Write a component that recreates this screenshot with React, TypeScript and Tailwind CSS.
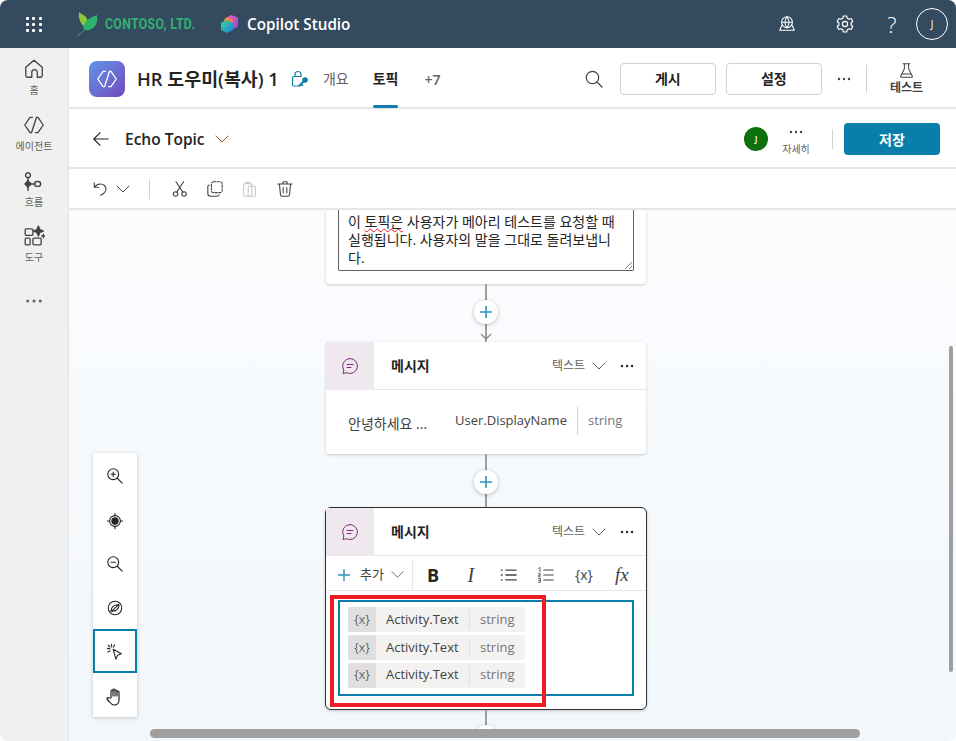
import { useId, type ReactNode } from "react";

/**
 * Copilot Studio topic editor
 * Header, sidebar, agent bar, topic bar and the authoring canvas.
 */

const line = {
  fill: "none",
  stroke: "currentColor",
  strokeWidth: 1.2,
  strokeLinecap: "round" as const,
  strokeLinejoin: "round" as const,
};

function Icon({ size = 20, children, className = "" }: { size?: number; children: ReactNode; className?: string }) {
  return (
    <svg width={size} height={size} viewBox="0 0 20 20" className={`shrink-0 ${className}`} {...line}>
      {children}
    </svg>
  );
}

function Chevron({ size = 14, className = "" }: { size?: number; className?: string }) {
  return (
    <svg width={size} height={size} viewBox="0 0 14 14" className={`shrink-0 ${className}`} {...line} strokeWidth={1}>
      <path d="M1 4l6 6 6-6" />
    </svg>
  );
}

function Dots({ className = "" }: { className?: string }) {
  return (
    <svg width="14" height="4" viewBox="0 0 14 4" className={`shrink-0 ${className}`} fill="currentColor">
      <circle cx="2" cy="2" r="1.2" />
      <circle cx="7" cy="2" r="1.2" />
      <circle cx="12" cy="2" r="1.2" />
    </svg>
  );
}

function AgentGlyph({ size = 20 }: { size?: number }) {
  return (
    <svg width={size} height={size} viewBox="0 0 20 20" className="shrink-0" {...line}>
      <path d="M8.6 3H6.4L1.6 10l4.8 7h1.3M11.4 17h2.2l4.8-7-4.8-7h-1.3M7.7 17L12.3 3" />
    </svg>
  );
}

function LeafLogo() {
  return (
    <svg width="22" height="26" viewBox="0 0 22 26" className="shrink-0">
      <path d="M2 1c3 3 7 3 8 7 .6 2.300-1 5-2.500 8C4 13 1 8 2 1z" fill="#8cc63f" />
      <path d="M20 4c1 7-1 13-8 15-3 .6-5-.6-5.500-2C6 11 13 6 20 4z" fill="#2fb170" />
      <path d="M0 25c4-2 9-7 14-14" fill="none" stroke="#2fb170" strokeWidth="1" />
    </svg>
  );
}

function CopilotLogo() {
  const id = useId();
  return (
    <svg width="19" height="20" viewBox="0 0 19 20" className="shrink-0">
      <defs>
        <linearGradient id={`${id}a`} x1="0" y1="0" x2="1" y2="1">
          <stop offset="0" stopColor="#f45bc0" />
          <stop offset="1" stopColor="#8a4be0" />
        </linearGradient>
        <linearGradient id={`${id}b`} x1="0" y1="0" x2="1" y2="1">
          <stop offset="0" stopColor="#f5a623" />
          <stop offset="1" stopColor="#f0558a" />
        </linearGradient>
        <linearGradient id={`${id}c`} x1="0" y1="0" x2="1" y2="1">
          <stop offset="0" stopColor="#3fd68a" />
          <stop offset="1" stopColor="#1d7fe8" />
        </linearGradient>
      </defs>
      <path d="M11 1l7 2.500v9L14 15l-6-9V3z" fill={`url(#${id}a)`} />
      <path d="M7 3l6 2.500V11l-7 2-2-7z" fill={`url(#${id}b)`} />
      <path d="M6 6l7 3v7l-6 3-6-3V9z" fill={`url(#${id}c)`} />
    </svg>
  );
}

function MessageIcon() {
  return (
    <svg width="20" height="20" viewBox="0 0 20 20" className="text-[#7b2d7b]" {...line} strokeWidth={1}>
      <path d="M10 2.500a7.500 7.500 0 1 1-3.400 14.200L3 17.500l.8-3.500A7.500 7.500 0 0 1 10 2.500z" />
      <path d="M7 8.500h6M7 11.500h4" />
    </svg>
  );
}

function NavItem({ label, icon, height = "h-[56px]" }: { label: string; icon: ReactNode; height?: string }) {
  return (
    <div className={`flex ${height} flex-col items-center`}>
      <div className="flex h-[24px] items-center text-[#424242]">{icon}</div>
      <span className="mt-[2px] text-[10px] leading-[14px] text-[#616161]">{label}</span>
    </div>
  );
}

function Sidebar() {
  return (
    <aside className="flex w-[69px] shrink-0 flex-col items-center border-r border-[#e3e3e3] bg-[#f0f0f0] pt-[9px]">
      <NavItem
        label="홈"
        icon={
          <Icon size={22}>
            <path d="M2.500 8.500L10 2l7.500 6.500V16a1.500 1.500 0 0 1-1.500 1.500h-3V13a2.500 2.500 0 0 0-5 0v4.500H4A1.500 1.500 0 0 1 2.500 16z" />
          </Icon>
        }
      />
      <NavItem label="에이전트" icon={<AgentGlyph size={22} />} />
      <NavItem
        label="흐름"
        height="h-[55px]"
        icon={
          <Icon size={24} className="mt-[4px]">
            <circle cx="5" cy="3.500" r="2" />
            <path d="M5 5.500v3M5 13v3" />
            <path d="M5 8.200l2.500 2.600L5 13.400l-2.500-2.600z" fill="currentColor" />
            <path d="M7.500 10.800h3" />
            <rect x="10.500" y="8.800" width="5" height="4" rx="2" />
          </Icon>
        }
      />
      <NavItem
        label="도구"
        height="h-[75px]"
        icon={
          <Icon size={22}>
            <rect x="2" y="3.500" width="7" height="6" rx="1" />
            <rect x="2" y="12" width="4.500" height="6" rx="1" />
            <rect x="9" y="12" width="7.500" height="6" rx="1" />
            <path d="M14 1l1.300 3.200 3.200 1.300-3.200 1.300L14 10l-1.300-3.200L9.500 5.500l3.200-1.300z" fill="currentColor" />
            <path d="M18.500 8.500v3M17 10h3" />
          </Icon>
        }
      />
      <Dots className="scale-125 text-[#616161]" />
    </aside>
  );
}

function TopBar() {
  return (
    <header className="flex h-[48px] shrink-0 items-center bg-[#344a5f] text-white">
      <div className="ml-[26px] grid w-[16px] grid-cols-3 gap-[3px]">
        {[...Array(9)].map((_, i) => (
          <span key={i} className="h-[3px] w-[3px] rounded-[1px] bg-white" />
        ))}
      </div>
      <div className="ml-[35px] flex items-center">
        <LeafLogo />
        <span className="ml-[6px] w-[90px] origin-left scale-x-[0.875] whitespace-nowrap font-['Roboto',sans-serif] text-[14px] font-bold tracking-[0.4px] text-[#2fb170]">
          CONTOSO, LTD.
        </span>
      </div>
      <div className="ml-[25px] flex items-center">
        <CopilotLogo />
        <span className="ml-[8px] text-[15.25px] font-semibold">Copilot Studio</span>
      </div>
      <div className="ml-auto flex items-center pr-[8px]">
        <Icon size={18}>
          <circle cx="10" cy="8" r="6" />
          <path d="M4 8h12M10 2c-3 3.500-3 8.500 0 12M10 2c3 3.500 3 8.500 0 12" />
          <path d="M4 12l-2 5h16l-2-5" />
        </Icon>
        <Icon size={20} className="ml-[39px]">
          <path d="M8.300 2h3.400l.5 2.300 1.700 1 2.200-.8 1.700 3-1.700 1.500v2l1.700 1.500-1.700 3-2.200-.8-1.700 1-.5 2.300H8.300l-.5-2.300-1.700-1-2.200.8-1.700-3L3.900 11V9L2.200 7.500l1.700-3 2.200.8 1.700-1z" />
          <circle cx="10" cy="10" r="2.600" />
        </Icon>
        <span className="ml-[27px] w-[20px] text-center text-[22px] font-light leading-none">?</span>
        <span className="ml-[14px] flex h-[32px] w-[32px] items-center justify-center rounded-full border border-white text-[10px]">
          J
        </span>
      </div>
    </header>
  );
}

function AgentBar() {
  return (
    <div className="flex h-[61px] shrink-0 items-center border-b-2 border-[#e6e6e6] pl-[20px] pr-[33px] pt-[2px]">
      <div className="flex h-[36px] w-[36px] items-center justify-center rounded-[8px] bg-gradient-to-br from-[#5a95ea] to-[#7048bd] text-white">
        <AgentGlyph size={22} />
      </div>
      <h1 className="ml-[12px] whitespace-nowrap text-[18.4px] font-semibold text-[#242424]">HR 도우미(복사) 1</h1>
      <svg width="18" height="18" viewBox="0 0 18 18" className="ml-[12px] text-[#0f7ea8]" {...line}>
        <path d="M10 6.500H3a1.500 1.500 0 0 0-1.500 1.500v6.500A1.500 1.500 0 0 0 3 16h5.500M4 6.500V4.500a3 3 0 0 1 6 0v2" />
        <circle cx="14" cy="10" r="2.800" fill="currentColor" stroke="none" />
        <path d="M12.500 11.500L8.500 15.500M10 14l1.300 1.300" strokeWidth={1.800} />
      </svg>
      <span className="ml-[14px] text-[14px] text-[#616161]">개요</span>
      <span className="relative ml-[24px] flex h-[57px] items-center text-[14px] font-bold text-[#242424]">
        토픽
        <span className="absolute bottom-[-1px] left-0 right-0 h-[3px] rounded-sm bg-[#0f7ea8]" />
      </span>
      <span className="ml-[26px] mt-[2px] text-[14px] font-semibold text-[#616161]">+7</span>
      <Icon size={20} className="ml-auto text-[#424242]">
        <circle cx="8.500" cy="8.500" r="6.200" />
        <path d="M13 13l5 5" />
      </Icon>
      <button className="ml-[16px] h-[32px] w-[96px] rounded-[4px] border border-[#d1d1d1] text-[14px] font-semibold text-[#242424]">
        게시
      </button>
      <button className="ml-[10px] h-[32px] w-[96px] rounded-[4px] border border-[#d1d1d1] text-[14px] font-semibold text-[#242424]">
        설정
      </button>
      <Dots className="ml-[15px] text-[#424242]" />
      <span className="ml-[15px] h-[28px] w-px bg-[#d1d1d1]" />
      <div className="ml-[23px] flex flex-col items-center">
        <Icon size={17} className="text-[#424242]">
          <path d="M6 2h8M7.500 2v6L3 17a1 1 0 0 0 1 1h12a1 1 0 0 0 1-1L12.500 8V2M5 14h10" />
        </Icon>
        <span className="mt-[1px] text-[12px] font-semibold leading-[16px] text-[#424242]">테스트</span>
      </div>
    </div>
  );
}

function TopicBar() {
  return (
    <div className="flex h-[60px] shrink-0 items-center border-b-2 border-[#e6e6e6] pl-[23px] pr-[16px] pt-[2px]">
      <Icon size={18} className="text-[#242424]">
        <path d="M2 10h16M9 3l-7 7 7 7" />
      </Icon>
      <span className="ml-[15px] mt-[1px] text-[15.5px] font-semibold text-[#242424]">Echo Topic</span>
      <Chevron className="ml-[10px] text-[#a8581c]" />
      <span className="ml-auto flex h-[24px] w-[24px] items-center justify-center rounded-full bg-[#0e700e] text-[9px] font-semibold text-white">
        J
      </span>
      <div className="ml-[13px] flex w-[30px] flex-col items-center self-start pt-[19px] text-[#424242]">
        <Dots />
        <span className="mt-[8px] whitespace-nowrap text-[10px] leading-[14px] text-[#616161]">자세히</span>
      </div>
      <span className="ml-[21px] h-[20px] w-px bg-[#d1d1d1]" />
      <button className="ml-[11px] h-[32px] w-[96px] rounded-[4px] bg-[#0a7eab] text-[14px] font-semibold text-white">
        저장
      </button>
    </div>
  );
}

function EditToolbar() {
  return (
    <div className="flex h-[41px] shrink-0 items-center border-b-2 border-[#e6e6e6] pl-[23px] text-[#424242]">
      <Icon size={18}>
        <path d="M2.500 3v5h5M2.500 8c2-2.500 4.500-3.500 7-3.500 3.500 0 6 2.500 6 5.500 0 3-2.500 5.500-6 7" />
      </Icon>
      <Chevron className="ml-[6px]" />
      <span className="ml-[19px] h-[20px] w-px bg-[#d1d1d1]" />
      <Icon size={18} className="ml-[21px]">
        <circle cx="5" cy="15.500" r="2.500" />
        <circle cx="14.500" cy="15.500" r="2.500" />
        <path d="M6.300 13.500L14 2M13.200 13.500L5.500 2" />
      </Icon>
      <Icon size={18} className="ml-[17px]">
        <rect x="6" y="2" width="12" height="12" rx="2.500" strokeDasharray="2.500 1.500" />
        <path d="M3.500 5.500A2 2 0 0 0 2 7.500V15a3 3 0 0 0 3 3h7.500a2 2 0 0 0 2-1.500" />
      </Icon>
      <Icon size={18} className="ml-[17px] text-[#c8c8c8]">
        <rect x="3" y="4" width="9" height="14" rx="1.500" />
        <rect x="8" y="7" width="8" height="11" rx="1" />
        <path d="M5.500 4V2.500h4V4" />
      </Icon>
      <Icon size={18} className="ml-[17px]">
        <path d="M2 4.500h16M7.500 4.500V3a1 1 0 0 1 1-1h3a1 1 0 0 1 1 1v1.500M3.800 4.500L5 16.500A1.800 1.800 0 0 0 6.800 18h6.400a1.800 1.800 0 0 0 1.800-1.500l1.200-12M8 8.500v6M12 8.500v6" />
      </Icon>
    </div>
  );
}

function PlusButton() {
  return (
    <div className="relative z-10 flex h-[24px] w-[24px] shrink-0 items-center justify-center rounded-full bg-white text-[#2b93b8] shadow-[0_1px_4px_rgba(0,0,0,0.25)]">
      <svg width="14" height="14" viewBox="0 0 14 14" fill="none" stroke="currentColor" strokeWidth="1.600">
        <path d="M7 1v12M1 7h12" />
      </svg>
    </div>
  );
}

function Connector({ arrow = false, height }: { arrow?: boolean; height: string }) {
  return (
    <div className={`relative flex ${height} flex-col items-center`}>
      <span className="absolute inset-y-0 w-[2px] bg-[#a19f9d]" />
      <div className="mt-[16px]">
        <PlusButton />
      </div>
      {arrow && (
        <svg width="12" height="8" viewBox="0 0 12 8" className="absolute bottom-[1px] text-[#8a8886]" fill="none" stroke="currentColor" strokeWidth="1.300">
          <path d="M1 1l5 5 5-5" />
        </svg>
      )}
    </div>
  );
}

function NodeHeader() {
  return (
    <div className="flex h-[48px] items-center border-b border-[#e6e6e6]">
      <div className="flex h-[48px] w-[48px] items-center justify-center bg-[#efe8ef]">
        <MessageIcon />
      </div>
      <span className="ml-[17px] text-[14px] font-bold text-[#242424]">메시지</span>
      <span className="ml-auto text-[12px] text-[#616161]">텍스트</span>
      <Chevron className="ml-[7px] text-[#616161]" />
      <Dots className="ml-[14px] mr-[12px] text-[#242424]" />
    </div>
  );
}

function VariableChip() {
  return (
    <div className="flex h-[25px] w-[177px] items-center rounded-[2px] bg-[#f3f2f1] text-[13px] text-[#424242]">
      <span className="flex h-full w-[28px] items-center justify-center rounded-l-[2px] bg-[#e0dfde] text-[13px] font-light text-[#242424]">
        {"{x}"}
      </span>
      <span className="ml-[10px] w-[73px] whitespace-nowrap">Activity.Text</span>
      <span className="ml-[10px] h-[19px] w-px bg-[#e0dfde]" />
      <span className="ml-[10px] text-[#757575]">string</span>
    </div>
  );
}

function RichToolbar() {
  return (
    <div className="flex h-[35px] items-center border-b border-[#e6e6e6] pl-[11px] pt-[3px] text-[#424242]">
      <svg width="14" height="14" viewBox="0 0 14 14" fill="none" stroke="#2b93b8" strokeWidth="1.400">
        <path d="M7 1v12M1 7h12" />
      </svg>
      <span className="ml-[9px] text-[13px]">추가</span>
      <Chevron size={13} className="ml-[7px] text-[#616161]" />
      <span className="ml-[8px] h-[30px] w-px bg-[#e6e6e6]" />
      <span className="ml-[12px] w-[16px] text-center text-[18px] font-bold leading-none text-[#242424]">B</span>
      <span className="ml-[22px] w-[16px] text-center font-['Liberation_Serif',serif] text-[20px] italic leading-none text-[#424242]">
        I
      </span>
      <Icon size={18} className="ml-[21px]">
        <path d="M6.500 4.500H18M6.500 10H18M6.500 15.500H18M1.500 4.500h1M1.500 10h1M1.500 15.500h1" strokeWidth={1.400} />
      </Icon>
      <Icon size={18} className="ml-[19px]">
        <path d="M7.500 4.500H18M7.500 10H18M7.500 15.500H18" strokeWidth={1.200} />
        <path d="M2 2.500l1.300-1v5M1.500 8.500h2.200v1.800H1.500v1.700h2.300M1.500 14h2.300v4H1.500M2 16h1.800" strokeWidth={0.900} />
      </Icon>
      <span className="ml-[19px] w-[20px] text-center text-[14px] text-[#424242]">{"{x}"}</span>
      <span className="ml-[18px] w-[20px] text-center font-['Liberation_Serif',serif] text-[19px] italic leading-none text-[#424242]">
        fx
      </span>
    </div>
  );
}

function Canvas() {
  return (
    <div className="relative min-h-0 flex-1 overflow-hidden bg-gradient-to-b from-[#fbfcfe] to-[#f1f7fb]">
      <div className="ml-[256px] flex w-[322px] flex-col">
        {/* Trigger node, its top is scrolled out of view */}
        <div className="mx-[1px] h-[74px] rounded-b-[4px] bg-white px-[12px] shadow-[0_1px_3px_rgba(0,0,0,0.2)]">
          <div className="relative h-[61px] w-[296px] rounded-b-[2px] border-x border-b border-[#616161] pl-[9px] text-[14px] leading-[18px] text-[#242424]">
            <p className="pt-[3px]">
              이{" "}
              <span className="underline decoration-[#e81123] decoration-wavy decoration-1 underline-offset-[1px]">토픽은</span>{" "}
              사용자가 메아리 테스트를 요청할 때
            </p>
            <p>실행됩니다. 사용자의 말을 그대로 돌려보냅니</p>
            <p>다.</p>
            <svg width="9" height="9" viewBox="0 0 9 9" className="absolute bottom-0 right-0 text-[#616161]" fill="none" stroke="currentColor" strokeWidth="0.800">
              <path d="M1 8l7-7M5 8l3-3" />
            </svg>
          </div>
        </div>

        <Connector arrow height="h-[58px]" />

        <div className="mx-[1px] h-[112px] rounded-[4px] bg-white shadow-[0_1px_3px_rgba(0,0,0,0.2)]">
          <NodeHeader />
          <div className="flex h-[63px] items-center pl-[22px] text-[14px] text-[#424242]">
            <span className="mt-[4px] w-[107px] whitespace-nowrap">안녕하세요 ...</span>
            <div className="mb-[2px] flex h-[28px] items-center text-[13px]">
              <span className="whitespace-nowrap">User.DisplayName</span>
              <span className="ml-[10px] h-[28px] w-px bg-[#d1d1d1]" />
              <span className="ml-[10px] text-[#757575]">string</span>
            </div>
          </div>
        </div>

        <Connector height="h-[53px]" />

        <div className="h-[203px] rounded-[6px] border border-[#323130] bg-white shadow-[0_1px_3px_rgba(0,0,0,0.2)]">
          <NodeHeader />
          <RichToolbar />
          <div className="mx-[12px] mt-[9px] flex h-[96px] flex-col gap-[2.75px] border-2 border-[#0a7eab] pl-[8px] pt-[5px]">
            <VariableChip />
            <VariableChip />
            <VariableChip />
          </div>
        </div>

        {/* Next connector, mostly hidden behind the scrollbar */}
        <div className="flex h-[28px] flex-col items-center overflow-hidden">
          <span className="h-[15px] w-[2px] shrink-0 bg-[#a19f9d]" />
          <PlusButton />
        </div>
      </div>

      {/* Annotation drawn over the node */}
      <div className="absolute left-[261px] top-[385px] h-[112px] w-[216px] border-4 border-[#ed1c24]" />

      {/* Zoom and pan controls */}
      <div className="absolute left-[24px] top-[243px] flex w-[44px] flex-col bg-white text-[#242424] shadow-[0_1px_4px_rgba(0,0,0,0.2)]">
        <div className="flex h-[44px] items-center justify-center pt-[2px]">
          <Icon size={18}>
            <circle cx="8" cy="8" r="6" />
            <path d="M12.500 12.500L18 18M5.500 8h5M8 5.500v5" />
          </Icon>
        </div>
        <div className="flex h-[44px] items-center justify-center pt-[3px]">
          <Icon size={18}>
            <circle cx="10" cy="10" r="6" />
            <circle cx="10" cy="10" r="3.500" fill="currentColor" />
            <path d="M10 1.500v2.500M10 16v2.500M1.500 10H4M16 10h2.500" />
          </Icon>
        </div>
        <div className="flex h-[44px] items-center justify-center pt-[2px]">
          <Icon size={18}>
            <circle cx="8" cy="8" r="6" />
            <path d="M12.500 12.500L18 18M5.500 8h5" />
          </Icon>
        </div>
        <div className="flex h-[44px] items-center justify-center pt-[2px]">
          <Icon size={18}>
            <circle cx="10" cy="10" r="7.500" />
            <path d="M5.500 13.500C6 9 9 6 14.500 6.500 14 11 11 14 5.500 13.500zM6 14l8-8" />
          </Icon>
        </div>
        <div className="flex h-[44px] items-center justify-center border-2 border-[#0a7eab] pt-[2px]">
          <Icon size={18}>
            <path d="M8 7l9 5-4 1.500-2 4.500z" />
            <path d="M6 1.500l.5 3M1.500 6l3 .5M2.500 2.500l2 2M9.500 2l-1 2.500M2 10l2.500-1" />
          </Icon>
        </div>
        <div className="flex h-[44px] items-center justify-center pt-[3px]">
          <Icon size={20}>
            <path d="M6 11V4a1 1 0 0 1 2 0v-1a1 1 0 0 1 2 0v1a1 1 0 0 1 2 0v1a1 1 0 0 1 2 0v8c0 3-2 5-4.500 5S6 17 4.500 15L2 12c-.5-1 1-2 2-1z" />
            <path d="M8 4v5M10 4v5M12 5v4" />
          </Icon>
        </div>
      </div>

      {/* Scrollbars */}
      <div className="absolute left-[880px] top-[136px] z-20 h-[326px] w-[4px] rounded-full bg-[#a19f9d]" />
      <div className="absolute bottom-[3px] left-[81px] z-20 h-[9px] w-[710px] rounded-full bg-[#a19f9d]" />
    </div>
  );
}

export default function App() {
  return (
    <div className="flex h-[741px] w-[956px] flex-col overflow-hidden rounded-[8px] bg-white font-['Open_Sans','Noto_Sans_CJK_KR',sans-serif]">
      <TopBar />
      <div className="flex min-h-0 flex-1">
        <Sidebar />
        <main className="flex min-w-0 flex-1 flex-col">
          <AgentBar />
          <TopicBar />
          <EditToolbar />
          <Canvas />
        </main>
      </div>
    </div>
  );
}
